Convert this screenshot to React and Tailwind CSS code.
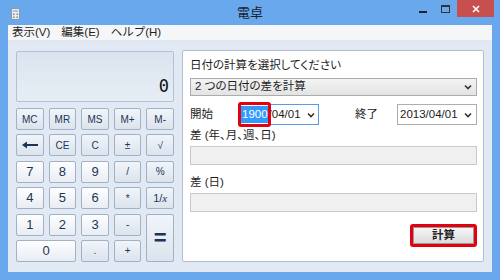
import React from "react";

const Chevron = ({ className = "" }) => (
  <svg width="8" height="6" viewBox="0 0 8 6" className={className}>
    <polyline points="1,1.5 4,4.5 7,1.5" fill="none" stroke="#333" strokeWidth="1.6" />
  </svg>
);

const CalcButton = ({ children, digit, className = "" }) => (
  <div
    className={`flex items-center justify-center rounded-[2px] border border-[#a3b1c2] text-[#1d3554] ${
      digit
        ? "bg-gradient-to-b from-[#fdfeff] to-[#e8edf4]"
        : "bg-gradient-to-b from-[#f1f5fa] to-[#dbe3ed]"
    } ${className}`}
  >
    {children}
  </div>
);

const Backspace = () => (
  <svg width="16" height="8" viewBox="0 0 16 8">
    <line x1="3" y1="4" x2="16" y2="4" stroke="#1d3554" strokeWidth="2" />
    <polygon points="0,4 5,0.5 5,7.5" fill="#1d3554" />
  </svg>
);

const CalcPanel = () => {
  const m = "text-[10px]";
  const d = "text-[13px]";
  return (
    <div className="flex w-[158px] flex-col pt-[10px]">
      {/* display */}
      <div className="flex h-[51px] items-end justify-end rounded-[2px] border border-[#b3c2d3] bg-gradient-to-b from-[#dbe4ee] to-[#e6edf5] pb-[6px] pr-[4px]">
        <span className="font-['DejaVu_Sans_Mono',monospace] text-[17px] leading-none text-[#111]">0</span>
      </div>

      <div className="mt-[6px] grid grid-cols-5 auto-rows-[22px] gap-x-[5px] gap-y-[4.4px]">
        <CalcButton className={m}>MC</CalcButton>
        <CalcButton className={m}>MR</CalcButton>
        <CalcButton className={m}>MS</CalcButton>
        <CalcButton className={m}>M+</CalcButton>
        <CalcButton className={m}>M-</CalcButton>

        <CalcButton><Backspace /></CalcButton>
        <CalcButton className={m}>CE</CalcButton>
        <CalcButton className={m}>C</CalcButton>
        <CalcButton className={m}>±</CalcButton>
        <CalcButton className={m}>√</CalcButton>

        <CalcButton digit className={d}>7</CalcButton>
        <CalcButton digit className={d}>8</CalcButton>
        <CalcButton digit className={d}>9</CalcButton>
        <CalcButton className={m}>/</CalcButton>
        <CalcButton className={m}>%</CalcButton>

        <CalcButton digit className={d}>4</CalcButton>
        <CalcButton digit className={d}>5</CalcButton>
        <CalcButton digit className={d}>6</CalcButton>
        <CalcButton className={m}>*</CalcButton>
        <CalcButton className="text-[11px]">
          1/<span className="font-['Liberation_Serif',serif] italic">x</span>
        </CalcButton>

        <CalcButton digit className={d}>1</CalcButton>
        <CalcButton digit className={d}>2</CalcButton>
        <CalcButton digit className={d}>3</CalcButton>
        <CalcButton className={m}>-</CalcButton>
        <CalcButton className="row-span-2 text-[22px] font-bold">=</CalcButton>

        <CalcButton digit className={`col-span-2 ${d}`}>0</CalcButton>
        <CalcButton className={m}>.</CalcButton>
        <CalcButton className={m}>+</CalcButton>
      </div>
    </div>
  );
};

const DatePanel = () => (
  <div className="flex h-[212px] w-[302px] flex-col rounded-[2px] border border-[#b4bfcc] bg-white pl-[7px] pr-[6px] pt-[6px] text-[11.5px] text-[#1e1e1e] [font-feature-settings:'palt']">
    <div className="h-[16px] leading-[16px]">日付の計算を選択してください</div>

    <div className="mt-[5px] flex h-[18px] items-center justify-between border border-[#acacac] bg-gradient-to-b from-[#f4f4f4] to-[#e3e3e3] pl-[4px] pr-[4px]">
      <span>2 つの日付の差を計算</span>
      <Chevron />
    </div>

    <div className="mt-[8px] flex h-[21px] items-center">
      <span className="w-[48px]">開始</span>
      <div className="relative flex h-[21px] w-[81px] items-center justify-between border border-[#569de5] bg-white pl-[2px] pr-[3px]">
        <span className="flex items-center">
          <span className="bg-[#3399ff] px-[1px] text-white">1900</span>
          <span>/04/01</span>
        </span>
        <Chevron />
        <div className="absolute left-[-1px] top-[-3px] h-[25px] w-[33px] rounded-[3px] border-[3px] border-[#e3000f]" />
      </div>
      <span className="ml-[36px] w-[42px]">終了</span>
      <div className="flex h-[21px] w-[80px] items-center justify-between border border-[#abadb3] bg-white pl-[2px] pr-[4px]">
        <span>2013/04/01</span>
        <Chevron />
      </div>
    </div>

    <div className="mt-[2px] h-[16px] leading-[16px]">差 (年、月、週、日)</div>
    <div className="mt-[3px] h-[19px] border border-[#c9c9c9] bg-[#f0f0f0]" />

    <div className="mt-[9px] h-[16px] leading-[16px]">差 (日)</div>
    <div className="mt-[3px] h-[19px] border border-[#c9c9c9] bg-[#f0f0f0]" />

    <div className="mt-[12px] flex justify-end">
      <div className="flex h-[23px] w-[67px] rounded-[3px] border-[3px] border-[#e3000f] p-0">
        <div className="flex flex-1 items-center justify-center border border-[#9a9a9a] bg-gradient-to-b from-[#f6f6f6] to-[#dcdcdc] font-bold text-[#222]">
          計算
        </div>
      </div>
    </div>
  </div>
);

export default function App() {
  return (
    <div className="flex h-[280px] w-[500px] flex-col bg-[#6aa8ee] font-['Liberation_Sans','Noto_Sans_CJK_JP',sans-serif]">
      {/* title bar */}
      <div className="grid h-[25px] grid-cols-[1fr_auto_1fr]">
        <div className="flex items-start pl-[11px] pt-[8px]">
          <svg width="9" height="12" viewBox="0 0 9 12">
            <rect x="0.5" y="0.5" width="8" height="11" fill="#e8ecf0" stroke="#8c99a8" />
            <rect x="2" y="2" width="5" height="2" fill="#a9c4de" />
            <rect x="2" y="5.5" width="1.5" height="1.5" fill="#7d8894" />
            <rect x="5.5" y="5.5" width="1.5" height="1.5" fill="#7d8894" />
            <rect x="2" y="8.5" width="1.5" height="1.5" fill="#7d8894" />
            <rect x="5.5" y="8.5" width="1.5" height="1.5" fill="#7d8894" />
          </svg>
        </div>
        <div className="pt-[5px] text-[13px] leading-[16px] text-[#1c2430]">電卓</div>
        <div className="flex justify-end pr-[6px]">
          <div className="mt-[11px] h-[2px] w-[8px] bg-[#222]" />
          <div className="ml-[14px] mt-[5px] h-[8px] w-[9px] border border-t-2 border-[#333]" />
          <div className="ml-[7px] flex h-[17px] w-[37px] items-center justify-center bg-[#c7504f]">
            <svg width="8" height="8" viewBox="0 0 8 8">
              <path d="M1 1 L7 7 M7 1 L1 7" stroke="#fff" strokeWidth="1.6" />
            </svg>
          </div>
        </div>
      </div>

      {/* window body */}
      <div className="mx-[8px] flex flex-1 flex-col">
        <div className="flex h-[16px] items-center gap-[11px] border-b border-[#e2e6ec] bg-[#f5f6f7] pl-[4px] text-[11.5px] text-[#1e1e1e]">
          <span>表示(V)</span>
          <span>編集(E)</span>
          <span>ヘルプ(H)</span>
        </div>
        <div className="flex flex-1 gap-[8px] bg-[#e0e9f4] pl-[8px]">
          <CalcPanel />
          <div className="pt-[9px]">
            <DatePanel />
          </div>
        </div>
      </div>
      <div className="h-[8px]" />
    </div>
  );
}
